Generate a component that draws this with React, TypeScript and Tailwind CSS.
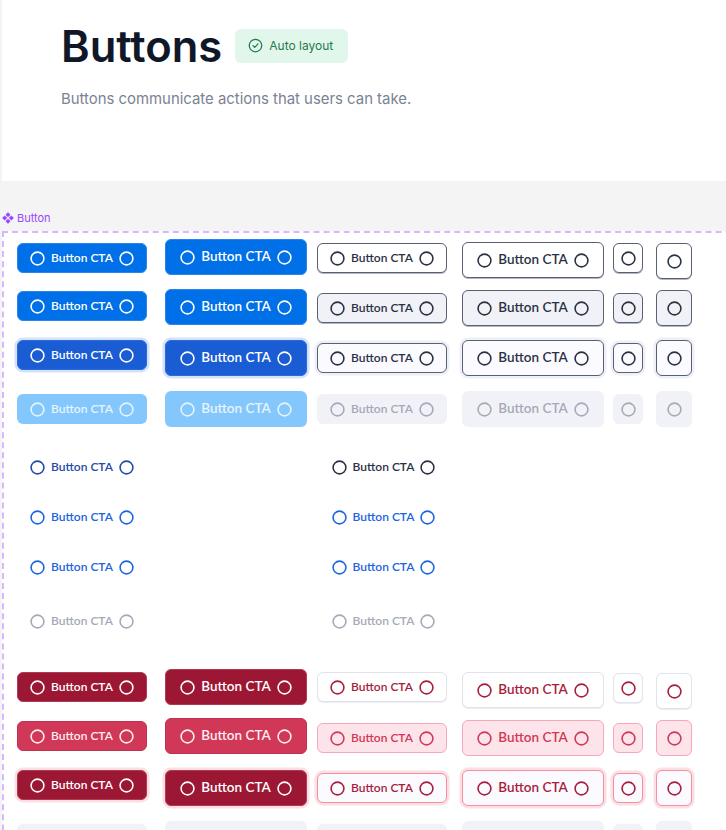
import type { ReactNode } from 'react';

type Size = 'sm' | 'lg' | 'iconSm' | 'iconLg';

type Tone = {
  box: string;
  text: string;
};

const tones: Record<string, Tone> = {
  primary: { box: 'bg-[#0070e8] border border-[#2b84ea]', text: 'text-white' },
  primaryPressed: { box: 'bg-[#1a5cd4] border border-[#2f69d8] shadow-[0_0_0_2.5px_#d3e2fb]', text: 'text-white' },
  primaryOff: { box: 'bg-[#84c7fc]', text: 'text-[#e6f4fe]' },
  outline: { box: 'bg-white border border-[#5a6074] shadow-[0_1px_0_#b4b8c5]', text: 'text-[#2b3145]' },
  outlineHover: { box: 'bg-[#f1f2f7] border border-[#5a6074] shadow-[0_1px_0_#b4b8c5]', text: 'text-[#2b3145]' },
  outlinePressed: { box: 'bg-[#fafaff] border border-[#5a6074] shadow-[0_0_0_2.5px_#eef0f7]', text: 'text-[#2b3145]' },
  off: { box: 'bg-[#f1f2f7]', text: 'text-[#a5a9b8]' },
  danger: { box: 'bg-[#9c1733] border border-[#b03a52]', text: 'text-white' },
  dangerHover: { box: 'bg-[#d13756] border border-[#c43150]', text: 'text-[#fdeef1]' },
  dangerPressed: { box: 'bg-[#9c1733] border border-[#b03a52] shadow-[0_0_0_2.5px_#fbdfe2]', text: 'text-white' },
  dangerOutline: { box: 'bg-white border border-[#e0e2ec] shadow-[0_1px_0_#eceef4]', text: 'text-[#a81d3a]' },
  dangerOutlineHover: { box: 'bg-[#fde4ea] border border-[#f7a8b8]', text: 'text-[#d13756]' },
  dangerOutlinePressed: { box: 'bg-[#fafaff] border border-[#f58fa1] shadow-[0_0_0_2.5px_#fbdfe2]', text: 'text-[#a81d3a]' },
  linkDark: { box: '', text: 'text-[#1f4aa8]' },
  linkBlue: { box: '', text: 'text-[#1c64e0]' },
  linkInk: { box: '', text: 'text-[#2b3145]' },
  linkOff: { box: '', text: 'text-[#a5a9b8]' },
};

const sizes: Record<Size, string> = {
  sm: 'w-[130px] h-[30px] gap-[6px] text-[12px] rounded-[6px]',
  lg: 'w-[142px] h-[36px] gap-[6.5px] text-[13.5px] rounded-[6px]',
  iconSm: 'w-[30px] h-[30px] rounded-[6px]',
  iconLg: 'w-[36px] h-[36px] rounded-[6px]',
};

function Dot() {
  return (
    <svg className="shrink-0" width="15" height="15" viewBox="0 0 15 15" fill="none" stroke="currentColor" strokeWidth="1.6">
      <circle cx="7.5" cy="7.5" r="6.4" />
    </svg>
  );
}

function Btn({ size, tone, empty = false, className = '' }: { size: Size; tone: string; empty?: boolean; className?: string }) {
  const t = tones[tone];
  const iconOnly = size === 'iconSm' || size === 'iconLg';
  return (
    <div className={`box-border flex items-center justify-center justify-self-start self-start font-semibold ${sizes[size]} ${t.box} ${t.text} ${className}`}>
      {!empty && <Dot />}
      {!iconOnly && !empty && <span className="whitespace-nowrap leading-none">Button CTA</span>}
      {!iconOnly && !empty && <Dot />}
    </div>
  );
}

function Row({ className, children }: { className: string; children: ReactNode }) {
  return <div className={`grid grid-cols-[148px_152px_145px_151px_43px_36px] ${className}`}>{children}</div>;
}

function ComponentIcon() {
  return (
    <svg width="12" height="12" viewBox="0 0 12 12" fill="#9747ff">
      <path d="M6 .2 8.5 2.7 6 5.2 3.5 2.7Z" />
      <path d="M6 6.8 8.5 9.3 6 11.8 3.5 9.3Z" />
      <path d="M2.7 3.5 5.2 6 2.7 8.5 .2 6Z" />
      <path d="M9.3 3.5 11.8 6 9.3 8.5 6.8 6Z" />
    </svg>
  );
}

export default function App() {
  return (
    <div className="h-[830px] w-[726px] overflow-hidden bg-[#f4f4f4] font-['Inter',sans-serif]">
      <header className="ml-[2px] h-[181px] bg-white pl-[60px] pt-[21px]">
        <div className="flex items-center gap-[13px]">
          <h1 className="-ml-px text-[43.5px] leading-[50px] font-semibold text-[#101828]">Buttons</h1>
          <div className="mt-[-1px] flex h-[34px] w-[113px] items-center gap-[6px] rounded-[6px] bg-[#e2f7ec] pl-[13px] text-[12px] text-[#1f7a4d]">
            <svg width="15" height="15" viewBox="0 0 24 24" fill="none" stroke="#1f7a4d" strokeWidth="2" strokeLinecap="round" strokeLinejoin="round">
              <circle cx="12" cy="12" r="10" />
              <path d="m8 12.2 2.8 2.8L16 9.5" />
            </svg>
            <span>Auto layout</span>
          </div>
        </div>
        <p className="mt-[18px] -ml-px text-[14.9px] leading-[20px] text-[#7a8294]">
          Buttons communicate actions that users can take.
        </p>
      </header>

      <div className="mt-[27px] flex h-[20px] items-center gap-[2px] pl-[2px] text-[11px] text-[#9747ff]">
        <ComponentIcon />
        <span className="ml-[1px]">Button</span>
      </div>

      <div className="mt-[3px] ml-[2px] h-[700px] w-[800px] border-t-2 border-l-2 border-dashed border-[#d7b8ff] bg-white pl-[13px] pt-[6px] font-['Lato',sans-serif]">
        <Row className="h-[50px]">
          <Btn size="sm" tone="primary" className="mt-[4px]" />
          <Btn size="lg" tone="primary" />
          <Btn size="sm" tone="outline" className="mt-[4px]" />
          <Btn size="lg" tone="outline" className="mt-[3px]" />
          <Btn size="iconSm" tone="outline" className="mt-[4px]" />
          <Btn size="iconLg" tone="outline" className="mt-[4px]" />
        </Row>
        <Row className="h-[51px]">
          <Btn size="sm" tone="primary" className="mt-[2px]" />
          <Btn size="lg" tone="primary" />
          <Btn size="sm" tone="outlineHover" className="mt-[4px]" />
          <Btn size="lg" tone="outlineHover" className="mt-[1px]" />
          <Btn size="iconSm" tone="outlineHover" className="mt-[4px]" />
          <Btn size="iconLg" tone="outlineHover" className="mt-[1px]" />
        </Row>
        <Row className="h-[51px]">
          <Btn size="sm" tone="primaryPressed" />
          <Btn size="lg" tone="primaryPressed" />
          <Btn size="sm" tone="outlinePressed" className="mt-[3px]" />
          <Btn size="lg" tone="outlinePressed" />
          <Btn size="iconSm" tone="outlinePressed" className="mt-[3px]" />
          <Btn size="iconLg" tone="outlinePressed" />
        </Row>
        <Row className="h-[61px]">
          <Btn size="sm" tone="primaryOff" className="mt-[3px]" />
          <Btn size="lg" tone="primaryOff" />
          <Btn size="sm" tone="off" className="mt-[3px]" />
          <Btn size="lg" tone="off" />
          <Btn size="iconSm" tone="off" className="mt-[3px]" />
          <Btn size="iconLg" tone="off" />
        </Row>

        <Row className="h-[50px]">
          <Btn size="sm" tone="linkDark" />
          <div />
          <Btn size="sm" tone="linkInk" className="ml-[1.5px]" />
        </Row>
        <Row className="h-[50px]">
          <Btn size="sm" tone="linkBlue" />
          <div />
          <Btn size="sm" tone="linkBlue" className="ml-[1.5px]" />
        </Row>
        <Row className="h-[54px]">
          <Btn size="sm" tone="linkBlue" />
          <div />
          <Btn size="sm" tone="linkBlue" className="ml-[1.5px]" />
        </Row>
        <Row className="h-[63px]">
          <Btn size="sm" tone="linkOff" />
          <div />
          <Btn size="sm" tone="linkOff" className="ml-[1.5px]" />
        </Row>

        <Row className="h-[49px]">
          <Btn size="sm" tone="danger" className="mt-[3px]" />
          <Btn size="lg" tone="danger" />
          <Btn size="sm" tone="dangerOutline" className="mt-[3px]" />
          <Btn size="lg" tone="dangerOutline" className="mt-[3px]" />
          <Btn size="iconSm" tone="dangerOutline" className="mt-[4px]" />
          <Btn size="iconLg" tone="dangerOutline" className="mt-[4px]" />
        </Row>
        <Row className="h-[52px]">
          <Btn size="sm" tone="dangerHover" className="mt-[3px]" />
          <Btn size="lg" tone="dangerHover" />
          <Btn size="sm" tone="dangerOutlineHover" className="mt-[5px]" />
          <Btn size="lg" tone="dangerOutlineHover" className="mt-[2px]" />
          <Btn size="iconSm" tone="dangerOutlineHover" className="mt-[5px]" />
          <Btn size="iconLg" tone="dangerOutlineHover" className="mt-[2px]" />
        </Row>
        <Row className="h-[51px]">
          <Btn size="sm" tone="dangerPressed" />
          <Btn size="lg" tone="dangerPressed" />
          <Btn size="sm" tone="dangerOutlinePressed" className="mt-[3px]" />
          <Btn size="lg" tone="dangerOutlinePressed" />
          <Btn size="iconSm" tone="dangerOutlinePressed" className="mt-[3px]" />
          <Btn size="iconLg" tone="dangerOutlinePressed" />
        </Row>
        <Row className="h-[40px]">
          <Btn size="sm" tone="off" empty className="mt-[3px]" />
          <Btn size="lg" tone="off" empty />
          <Btn size="sm" tone="off" empty className="mt-[3px]" />
          <Btn size="lg" tone="off" empty />
          <Btn size="iconSm" tone="off" empty className="mt-[3px]" />
          <Btn size="iconLg" tone="off" empty />
        </Row>
      </div>
    </div>
  );
}
